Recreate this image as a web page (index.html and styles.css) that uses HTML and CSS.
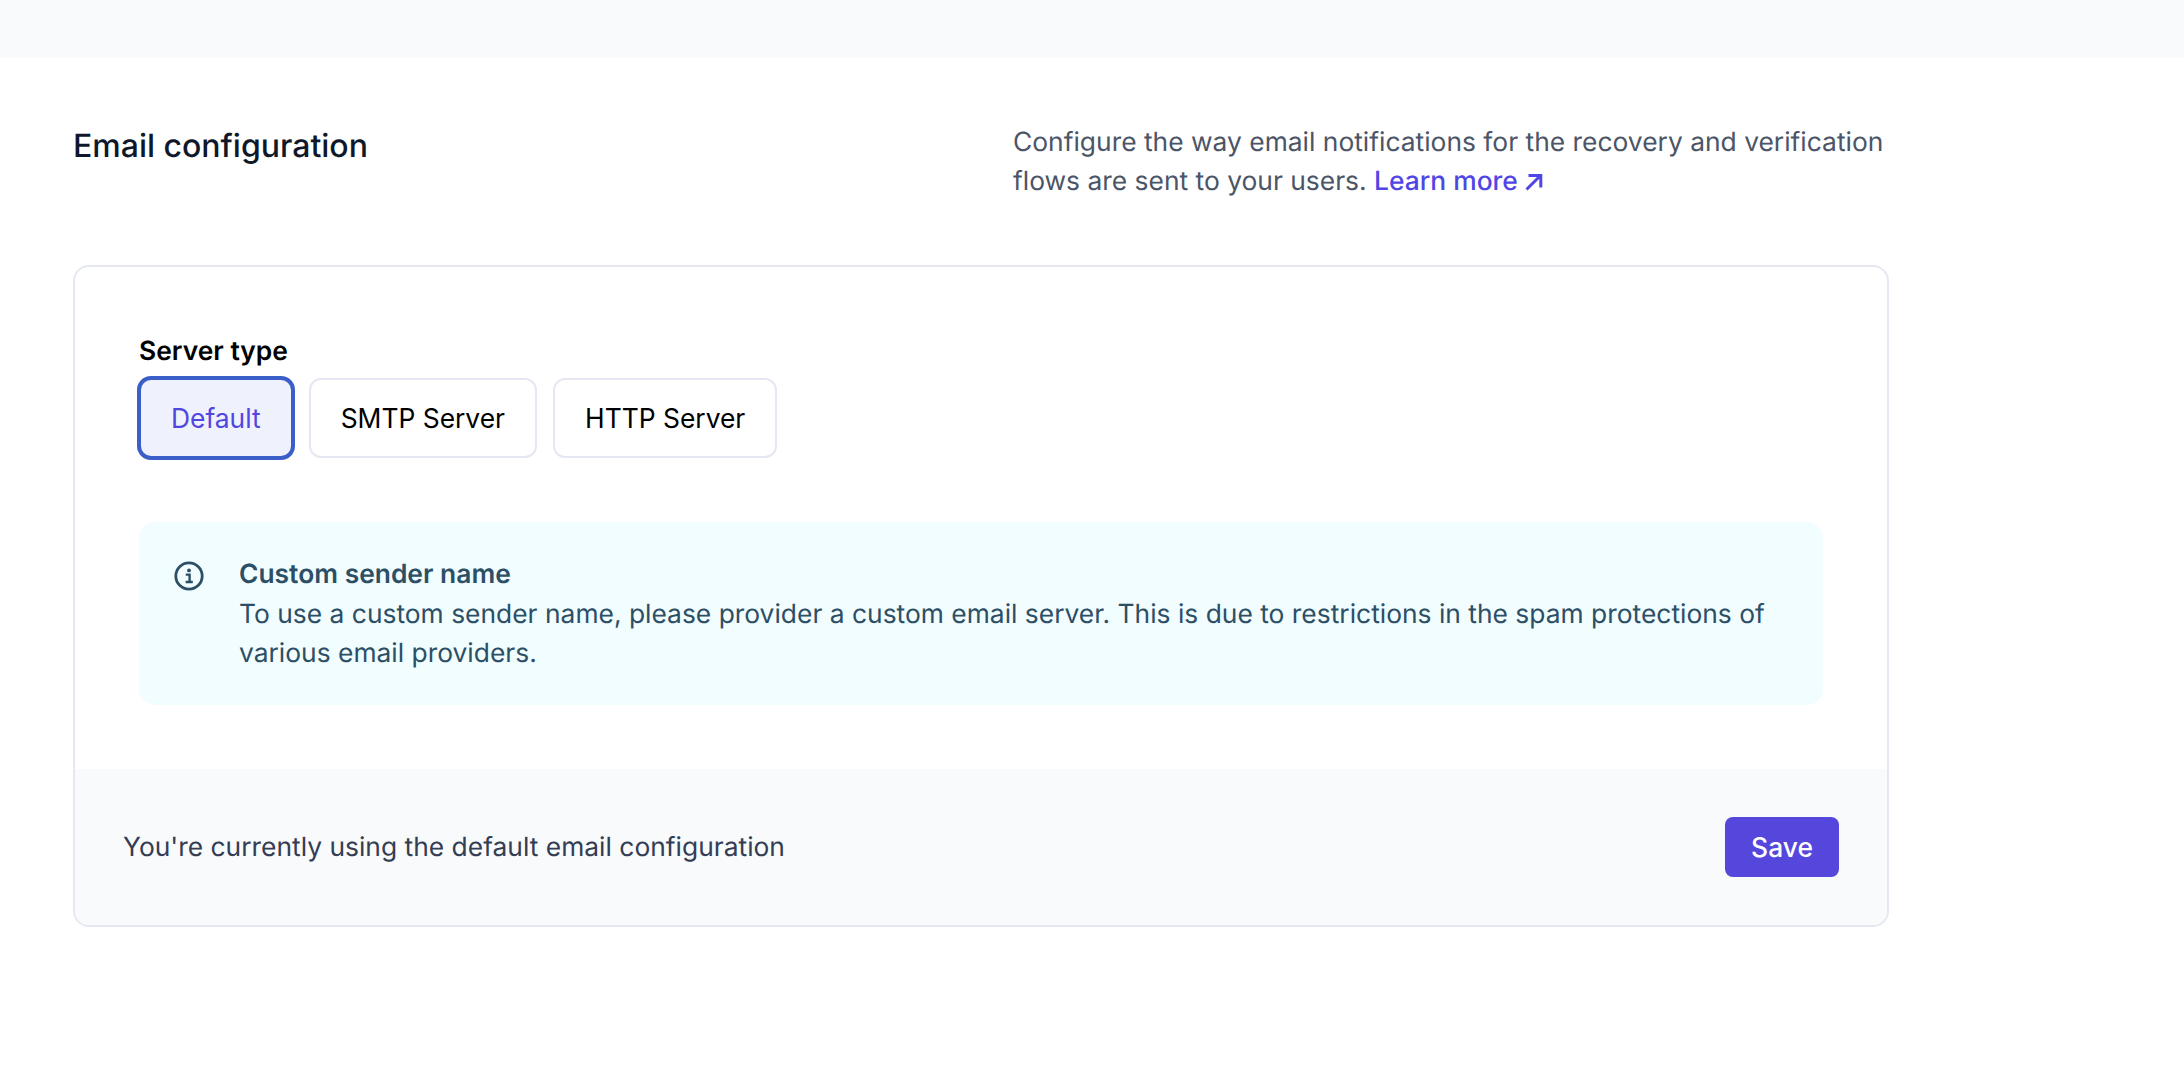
FILE: index.html
```html
<!DOCTYPE html>
<html lang="en">
<head>
<meta charset="utf-8">
<title>Email configuration</title>
<link rel="stylesheet" href="styles.css">
</head>
<body>
<div class="topbar"></div>
<main class="content">
  <header class="head">
    <h2 class="title">Email configuration</h2>
    <p class="desc">Configure the way email notifications for the recovery and verification flows are sent to your users. <a class="link">Learn more <svg class="ext" viewBox="0 0 18 18" width="18" height="18" fill="none" stroke="currentColor" stroke-width="3"><path d="M1.5 16.5 15 3M3.5 2.5H15.8V14.5"/></svg></a></p>
  </header>
  <section class="card">
    <div class="body">
      <div class="label">Server type</div>
      <div class="options">
        <button class="opt active">Default</button>
        <button class="opt">SMTP Server</button>
        <button class="opt">HTTP Server</button>
      </div>
      <div class="note">
        <svg class="info" viewBox="0 0 30 30" width="30" height="30" fill="none"><circle cx="15" cy="15" r="13.2" stroke="#2d4f66" stroke-width="2.8"/><circle cx="15" cy="9.4" r="1.9" fill="#2d4f66"/><path d="M11.8 13.6h3.8v7.2M11.6 21h7.2" stroke="#2d4f66" stroke-width="2.4"/></svg>
        <div class="note-text">
          <div class="note-title">Custom sender name</div>
          <div>To use a custom sender name, please provider a custom email server. This is due to restrictions in the spam protections of various email providers.</div>
        </div>
      </div>
    </div>
    <footer class="foot">
      <span>You're currently using the default email configuration</span>
      <button class="save">Save</button>
    </footer>
  </section>
</main>
</body>
</html>
```
FILE: styles.css
```css
* { box-sizing: border-box; }
html, body { margin: 0; background: #fff; }
body { font-family: Inter, sans-serif; font-size: 26.4px; height: 1092px; overflow: hidden; text-rendering: geometricPrecision; }
.topbar { height: 58px; background: #f9fafb; }
.content { width: 1816px; margin-left: 73px; padding-top: 64px; }
.head { display: flex; justify-content: space-between; padding-right: 4px; }
.title { margin: 0; font-size: 32px; line-height: 40px; font-weight: 500; color: #0f172a; padding-top: 4px; }
.desc { margin: 0; width: 872px; padding-top: 1px; line-height: 39px; color: #4b5567; }
.link { color: #4f46e5; font-weight: 500; }
.ext { vertical-align: -1px; }
.card { margin-top: 64px; border: 2px solid #e5e8f3; border-radius: 16px; overflow: hidden; }
.body { padding: 68px 64px 64px; }
.label { line-height: 32px; font-weight: 600; color: #000; }
.options { display: flex; gap: 16px; margin-top: 11px; }
.opt { height: 80px; padding: 0 30px; font: inherit; background: #fff; color: #000; border: 2px solid #e5e8f3; border-radius: 12px; }
.opt.active { background: #eff1fd; color: #5146e0; border-color: #3b5fc9; box-shadow: 0 0 0 2px #3b5fc9; }
.note { display: flex; gap: 35px; margin-top: 64px; padding: 32px 35px; background: #f1fdff; border-radius: 16px; color: #2d4f66; line-height: 39px; }
.info { flex: none; margin-top: 7px; }
.note-title { font-weight: 600; line-height: 41px; }
.foot { display: flex; justify-content: space-between; align-items: center; height: 156px; padding: 0 48px; background: #f9fafc; color: #333d54; }
.save { height: 60px; width: 114px; font: inherit; font-weight: 500; color: #fff; background: #5546dc; border: none; border-radius: 8px; }
```
